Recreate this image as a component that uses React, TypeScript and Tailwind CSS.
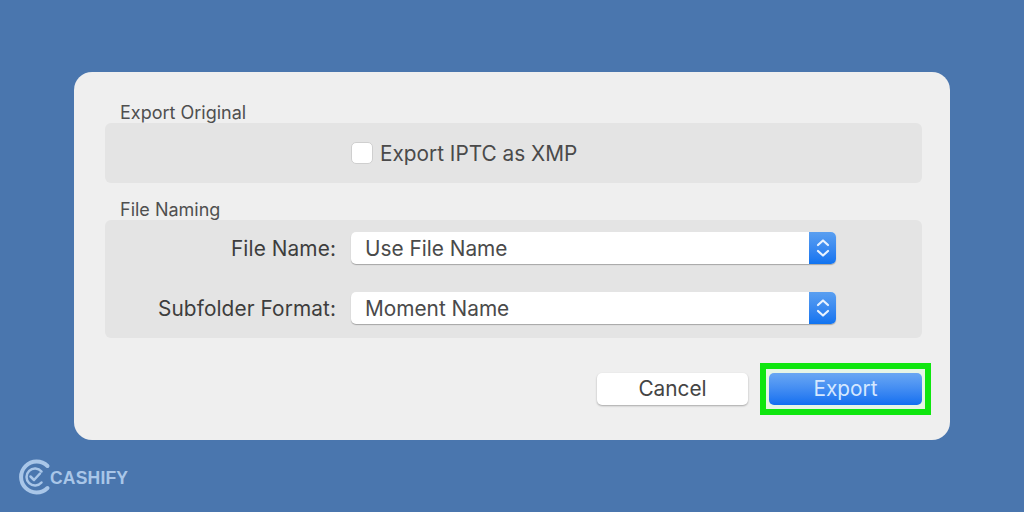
function Stepper() {
  return (
    <div className="w-[27px] h-full rounded-r-[5px] bg-gradient-to-b from-[#5a9ff0] to-[#0f73f0] flex items-center justify-center">
      <svg width="16" height="24" viewBox="0 0 16 24" fill="none" stroke="#e8f2ff" strokeWidth="2.200" strokeLinecap="round" strokeLinejoin="round">
        <path d="M3 9 8 4.500 13 9" />
        <path d="M3 15 8 19.500 13 15" />
      </svg>
    </div>
  );
}

function SelectRow({ label, value }: { label: string; value: string }) {
  return (
    <div className="flex items-center h-8">
      <div className="w-[231px] pt-[1px] text-right text-[20.800px] tracking-[0.1px] text-[#3d3d3d]">{label}</div>
      <div className="ml-[15px] w-[485px] h-8 flex rounded-[5px] bg-white shadow-[0_1px_1px_rgba(0,0,0,0.28)]">
        <div className="flex-1 pl-[14px] pt-[1px] text-[20.800px] leading-8 text-[#4a4a4a]">{value}</div>
        <Stepper />
      </div>
    </div>
  );
}

export default function App() {
  return (
    <div className="relative w-[1024px] h-[512px] overflow-hidden bg-[#4a76ae] font-['Inter','Liberation_Sans',sans-serif]">
      <div className="flex justify-start pt-[72px] pl-[74px]">
        <div className="w-[876px] h-[368px] rounded-[18px] bg-[#efefef] pl-[31px] pr-[28px] pt-[28px] flex flex-col">
          <div className="h-[23px] pl-[15px] text-[18px] leading-[26px] text-[#4f4f4f]">Export Original</div>
          <div className="h-[60px] rounded-[6px] bg-[#e4e4e4] flex items-center pl-[246px]">
            <div className="w-[22px] h-[22px] rounded-[5px] bg-white border border-[#cfcfcf]" />
            <div className="ml-[7px] text-[20.800px] leading-[30px] pt-[1px] text-[#4a4a4a]">Export IPTC as XMP</div>
          </div>
          <div className="h-[37px] pt-[14px] pl-[15px] text-[18px] leading-[26px] text-[#4f4f4f]">File Naming</div>
          <div className="h-[118px] rounded-[6px] bg-[#e4e4e4] pt-3 flex flex-col gap-7">
            <SelectRow label="File Name:" value="Use File Name" />
            <SelectRow label="Subfolder Format:" value="Moment Name" />
          </div>
          <div className="flex justify-end items-center mt-[25px] -mr-[9px] gap-[12px]">
            <button className="w-[151px] h-8 rounded-[5px] bg-white shadow-[0_1px_2px_rgba(0,0,0,0.3)] text-[20.800px] text-[#444444]">Cancel</button>
            <div className="w-[171px] h-[52px] border-[6px] border-[#0fe60f] bg-[#e6f5e6] flex items-center justify-center">
              <button className="w-[153px] h-8 rounded-[5px] bg-gradient-to-b from-[#69a7f3] to-[#0f6ff0] text-[20.800px] text-[#d5e8ff]">Export</button>
            </div>
          </div>
        </div>
      </div>
      <div className="absolute left-[17px] top-[459px] flex items-center">
        <svg width="36" height="36" viewBox="0 0 36 36" fill="none" stroke="#a9c6e8" strokeLinecap="round">
          <path d="M30.500 7A15.500 15.500 0 1 0 30.500 29" strokeWidth="4" />
          <path d="M24.500 12.500A8.500 8.500 0 1 0 24.500 23.500" strokeWidth="2.500" />
          <path d="M13.500 17.500l3.500 3.500 6-6.500" strokeWidth="2.500" strokeLinejoin="round" />
        </svg>
        <span className="-ml-[3px] pt-[3px] text-[17.500px] font-bold leading-none tracking-[0.2px] text-[#a9c6e8] font-['Liberation_Sans',sans-serif]">CASHIFY</span>
      </div>
    </div>
  );
}
